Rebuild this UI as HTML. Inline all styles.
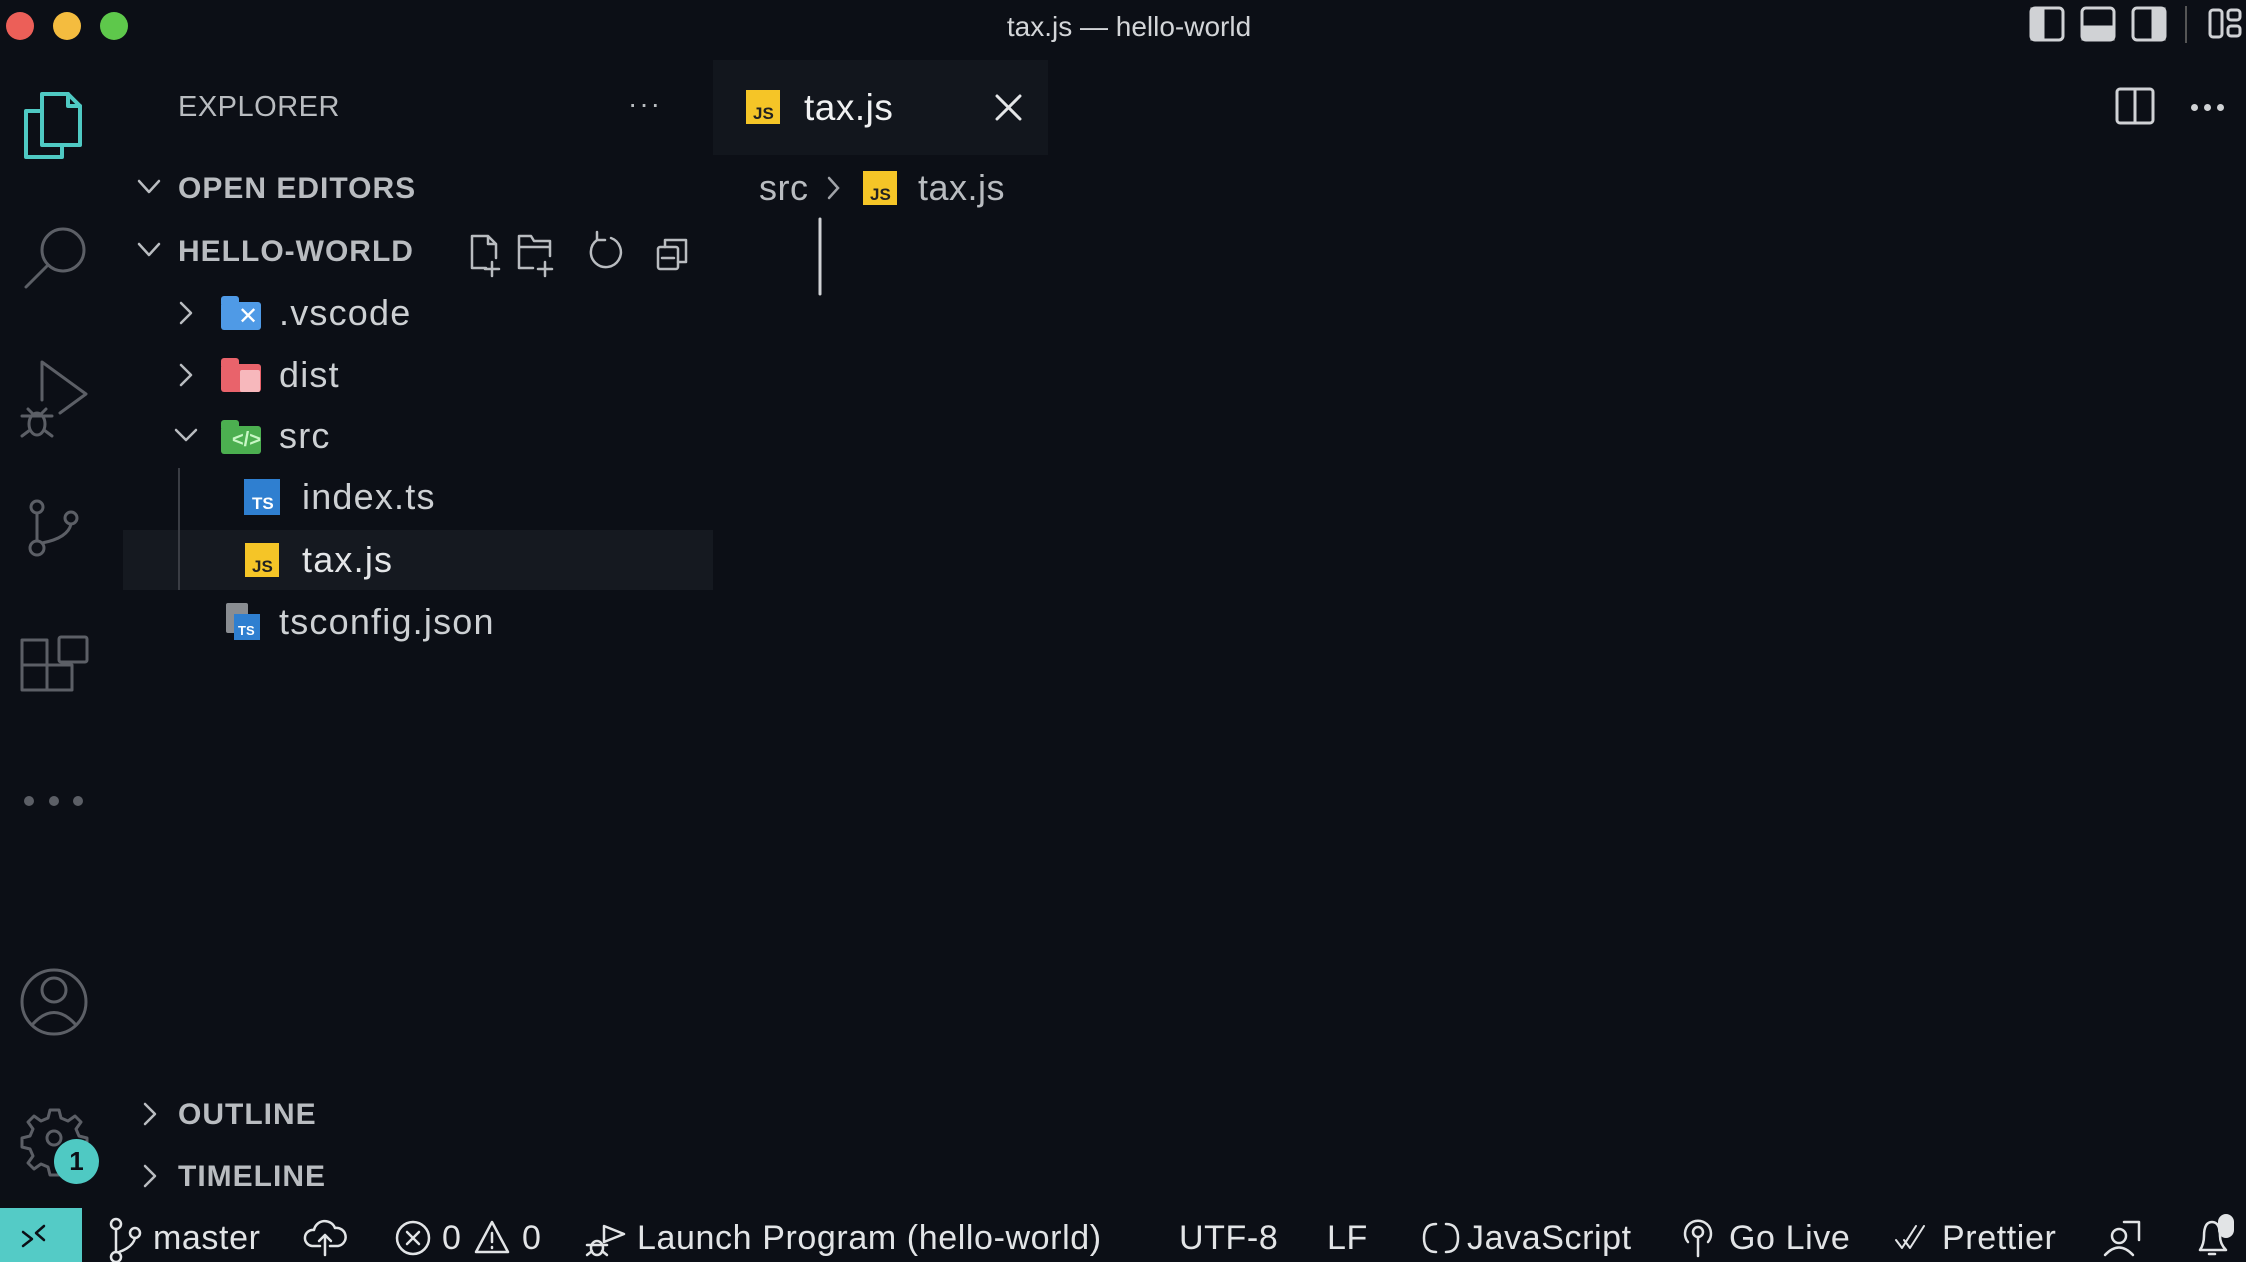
<!DOCTYPE html>
<html><head><meta charset="utf-8"><style>
*{margin:0;padding:0;box-sizing:border-box}
body{width:2246px;height:1262px;background:#0c0f16;overflow:hidden;position:relative;font-family:"Liberation Sans",sans-serif;color:#cfd1d4}
.a{position:absolute}
.t{position:absolute;white-space:nowrap;line-height:1}
svg{position:absolute;overflow:visible}
.h{font-weight:bold;font-size:30px;color:#b9bcc0;letter-spacing:1px}
.f{font-size:36px;color:#cdd0d3;letter-spacing:1.2px}
.s{font-size:34px;color:#e2e4e6;top:1221px;letter-spacing:0.6px}
.js{position:absolute;width:34px;height:34px;background:#f5c527;color:#222;font-weight:bold;font-size:17px;line-height:1;padding:15px 0 0 7px}
.ts{position:absolute;width:36px;height:36px;background:#2f7fd0;color:#fff;font-weight:bold;font-size:17px;padding:16px 0 0 8px;line-height:1}
</style></head><body>
<div class="a" style="left:6px;top:12px;width:28px;height:28px;border-radius:50%;background:#ec5f58"></div>
<div class="a" style="left:53px;top:12px;width:28px;height:28px;border-radius:50%;background:#f4bc3f"></div>
<div class="a" style="left:100px;top:12px;width:28px;height:28px;border-radius:50%;background:#5ec84b"></div>
<div class="t" style="left:0;width:2258px;text-align:center;top:13px;font-size:28px;color:#d3d5d8">tax.js — hello-world</div>
<svg style="left:0;top:0" width="2246" height="60" fill="none" stroke="#d0d2d5" stroke-width="3">
<rect x="2031" y="8" width="32" height="32" rx="4"/><rect x="2032" y="9" width="11" height="30" fill="#d0d2d5"/>
<rect x="2082" y="8" width="32" height="32" rx="4"/><rect x="2083" y="27" width="30" height="12" fill="#d0d2d5"/>
<rect x="2133" y="8" width="32" height="32" rx="4"/><rect x="2153" y="9" width="11" height="30" fill="#d0d2d5"/>
<line x1="2186" y1="6" x2="2186" y2="43" stroke="#555" stroke-width="2"/>
<rect x="2210" y="10" width="12" height="27" rx="3"/><rect x="2228" y="10" width="12" height="10" rx="3"/><rect x="2228" y="26" width="12" height="10" rx="3"/>
</svg>
<svg style="left:0;top:0" width="120" height="1210" fill="none" stroke="#5c5f66" stroke-width="3" stroke-linecap="round" stroke-linejoin="round">
<g stroke="#4fc9c3" stroke-width="4"><path d="M42 111 H26 V157 H62 V145"/><path d="M42 94 H68 L80 106 V145 H42 Z"/><path d="M68 94 V106 H80"/></g>
<circle cx="63" cy="250" r="21"/><path d="M48 265 L26 287"/>
<path d="M42 400 V362 L86 394 L60 413"/><ellipse cx="37" cy="424" rx="8" ry="11"/><path d="M22 416 H52 M22 436 L30 430 M52 436 L44 430 M28 409 L33 414 M46 409 L41 414"/>
<circle cx="37" cy="507" r="6"/><circle cx="71" cy="518" r="6"/><circle cx="37" cy="548" r="7"/><path d="M37 513 V541 M71 524 Q68 538 42 543"/>
<rect x="22" y="665" width="25" height="25"/><rect x="47" y="665" width="25" height="25"/><rect x="22" y="640" width="25" height="25"/><rect x="59" y="637" width="28" height="25" rx="2"/>
<circle cx="54" cy="1002" r="32"/><circle cx="54" cy="990" r="12"/><path d="M32 1025 Q54 1000 76 1025"/>
<path d="M54 1110 l5 0 l2 8 l7 3 l7-5 l6 6 l-5 7 l3 7 l8 2 v9 l-8 2 l-3 7 l5 7 l-6 6 l-7-5 l-7 3 l-2 8 h-9 l-2-8 l-7-3 l-7 5 l-6-6 l5-7 l-3-7 l-8-2 v-9 l8-2 l3-7 l-5-7 l6-6 l7 5 l7-3 l2-8 z"/><circle cx="54" cy="1138" r="7"/>
</svg>
<div class="a" style="left:24px;top:796px;width:10px;height:10px;border-radius:50%;background:#5c5f66"></div>
<div class="a" style="left:49px;top:796px;width:10px;height:10px;border-radius:50%;background:#5c5f66"></div>
<div class="a" style="left:73px;top:796px;width:10px;height:10px;border-radius:50%;background:#5c5f66"></div>
<div class="a" style="left:54px;top:1139px;width:45px;height:45px;border-radius:50%;background:#4fc9c3;color:#0c0f16;font-size:26px;font-weight:bold;text-align:center;line-height:45px">1</div>
<div class="t" style="left:178px;top:93px;font-size:29px;color:#b9bcc0;letter-spacing:0.5px">EXPLORER</div>
<div class="t" style="left:628px;top:90px;font-size:28px;color:#b9bcc0;letter-spacing:2px">···</div>
<div class="a" style="left:123px;top:530px;width:590px;height:60px;background:#151920"></div>
<div class="a" style="left:178px;top:468px;width:2px;height:122px;background:#3a3d44"></div>
<svg style="left:0;top:0" width="720" height="1200" fill="none" stroke="#b9bcc0" stroke-width="2.5" stroke-linecap="round" stroke-linejoin="round">
<path d="M139 181 L149 192 L159 181"/><path d="M139 244 L149 255 L159 244"/>
<path d="M181 303 L191 313 L181 323"/><path d="M181 365 L191 375 L181 385"/><path d="M176 430 L186 440 L196 430"/>
<path d="M145 1104 L155 1114 L145 1124"/><path d="M145 1166 L155 1176 L145 1186"/>
<path d="M472 236 V268 H486 M472 236 H488 L496 244 V258 M488 236 V244 H496 M492 262 V276 M485 269 H499"/>
<path d="M519 236 V268 H533 M519 236 H531 L534 241 H550 V256 M519 247 H550 M545 262 V276 M538 269 H552"/>
<path d="M597 240 A15 15 0 1 0 611 238 M597 240 V232 M597 240 H605"/>
<rect x="658" y="247" width="20" height="22" rx="2"/><path d="M665 247 V240 H686 V262 H678 M662 258 H674"/>
</svg>
<div class="t h" style="left:178px;top:174px">OPEN EDITORS</div>
<div class="t h" style="left:178px;top:237px">HELLO-WORLD</div>
<div class="a" style="left:221px;top:296px;width:18px;height:8px;background:#4f9ae6;border-radius:3px 3px 0 0"></div>
<div class="a" style="left:221px;top:302px;width:40px;height:28px;background:#4f9ae6;border-radius:3px"></div>
<div class="t" style="left:238px;top:305px;font-size:24px;color:#fff">✕</div>
<div class="a" style="left:221px;top:358px;width:18px;height:8px;background:#e9636b;border-radius:3px 3px 0 0"></div>
<div class="a" style="left:221px;top:364px;width:40px;height:28px;background:#e9636b;border-radius:3px"></div>
<div class="a" style="left:240px;top:370px;width:20px;height:22px;background:#f7b8bc;border-radius:2px"></div>
<div class="a" style="left:221px;top:420px;width:18px;height:8px;background:#4caf50;border-radius:3px 3px 0 0"></div>
<div class="a" style="left:221px;top:426px;width:40px;height:28px;background:#4caf50;border-radius:3px"></div>
<div class="t" style="left:232px;top:430px;font-size:20px;color:#c8f7c5;font-weight:bold">&lt;/&gt;</div>
<div class="t f" style="left:279px;top:295px">.vscode</div>
<div class="t f" style="left:279px;top:357px">dist</div>
<div class="t f" style="left:279px;top:418px">src</div>
<div class="ts" style="left:244px;top:479px">TS</div>
<div class="t f" style="left:302px;top:479px">index.ts</div>
<div class="js" style="left:245px;top:543px">JS</div>
<div class="t f" style="left:302px;top:542px;color:#e4e6e8">tax.js</div>
<div class="a" style="left:226px;top:603px;width:22px;height:30px;background:#8a8d92;border-radius:2px"></div>
<div class="ts" style="left:234px;top:614px;width:26px;height:26px;font-size:13px;padding:10px 0 0 4px">TS</div>
<div class="t f" style="left:279px;top:604px">tsconfig.json</div>
<div class="t h" style="left:178px;top:1100px">OUTLINE</div>
<div class="t h" style="left:178px;top:1162px">TIMELINE</div>
<div class="a" style="left:713px;top:60px;width:335px;height:95px;background:#12161d"></div>
<div class="js" style="left:746px;top:90px">JS</div>
<div class="t" style="left:804px;top:89px;font-size:37px;color:#f0f1f2;letter-spacing:0.5px">tax.js</div>
<svg style="left:0;top:0" width="1100" height="300" fill="none" stroke="#e4e6e8" stroke-width="3" stroke-linecap="round">
<path d="M997 96 L1020 119 M1020 96 L997 119"/>
<path d="M829 178 L838 188 L829 198" stroke="#a0a3a8" stroke-width="2.5"/>
<path d="M820 219 V294" stroke="#d0d2d5"/>
</svg>
<div class="t" style="left:759px;top:170px;font-size:36px;color:#b9bcc0;letter-spacing:0.5px">src</div>
<div class="js" style="left:863px;top:171px">JS</div>
<div class="t" style="left:918px;top:170px;font-size:36px;color:#b9bcc0;letter-spacing:0.5px">tax.js</div>
<svg style="left:0;top:0" width="2246" height="200" fill="none" stroke="#d0d2d5" stroke-width="3">
<rect x="2117" y="89" width="36" height="34" rx="3"/><path d="M2135 89 V123"/>
</svg>
<div class="a" style="left:2191px;top:104px;width:7px;height:7px;border-radius:50%;background:#d0d2d5"></div>
<div class="a" style="left:2204px;top:104px;width:7px;height:7px;border-radius:50%;background:#d0d2d5"></div>
<div class="a" style="left:2217px;top:104px;width:7px;height:7px;border-radius:50%;background:#d0d2d5"></div>
<div class="a" style="left:0;top:1208px;width:82px;height:54px;background:#54cbc6"></div>
<svg style="left:0;top:1200px" width="2246" height="62" fill="none" stroke="#e2e4e6" stroke-width="2.5" stroke-linecap="round" stroke-linejoin="round">
<path d="M23 46 L32 39 L23 32 M44 26 L36 33 L44 40" stroke="#0c0f16"/>
<circle cx="116" cy="24" r="5"/><circle cx="135" cy="33" r="5"/><circle cx="116" cy="57" r="5"/><path d="M116 29 V52 M135 38 Q133 47 119 52"/>
<path d="M320 46 H312 A8 8 0 0 1 314 30 A11 11 0 0 1 335 28 A8 8 0 0 1 338 46 H330 M325 55 V36 M319 41 L325 35 L331 41"/>
<circle cx="413" cy="38" r="16"/><path d="M407 32 L419 44 M419 32 L407 44"/>
<path d="M492 22 L508 52 H476 Z"/><path d="M492 33 V42 M492 47 V48"/>
<path d="M604 26 V42 L624 34 Z"/><ellipse cx="597" cy="48" rx="6" ry="7"/><path d="M587 45 H607 M587 55 L592 51 M607 55 L602 51"/>
<path d="M1436 24 Q1424 24 1424 38 Q1424 52 1436 52 M1446 24 Q1458 24 1458 38 Q1458 52 1446 52"/>
<circle cx="1698" cy="32" r="5"/><path d="M1698 37 V56 M1688 42 A13 13 0 1 1 1708 42"/>
<path d="M1896 40 L1902 48 L1916 26 M1904 40 L1910 48 L1924 26" stroke-width="2"/>
<circle cx="2119" cy="36" r="7"/><path d="M2105 55 Q2119 40 2133 55 M2124 22 H2139 V40"/>
<path d="M2200 50 H2226 Q2220 44 2220 36 Q2220 22 2212 22 Q2204 22 2204 36 Q2204 44 2200 50 M2209 54 H2215"/>
</svg>
<div class="a" style="left:2218px;top:1214px;width:16px;height:24px;border-radius:8px;background:#e2e4e6"></div>
<div class="t s" style="left:153px">master</div>
<div class="t s" style="left:442px">0</div>
<div class="t s" style="left:522px">0</div>
<div class="t s" style="left:637px">Launch Program (hello-world)</div>
<div class="t s" style="left:1179px">UTF-8</div>
<div class="t s" style="left:1327px">LF</div>
<div class="t s" style="left:1467px">JavaScript</div>
<div class="t s" style="left:1729px">Go Live</div>
<div class="t s" style="left:1942px">Prettier</div>
</body></html>
